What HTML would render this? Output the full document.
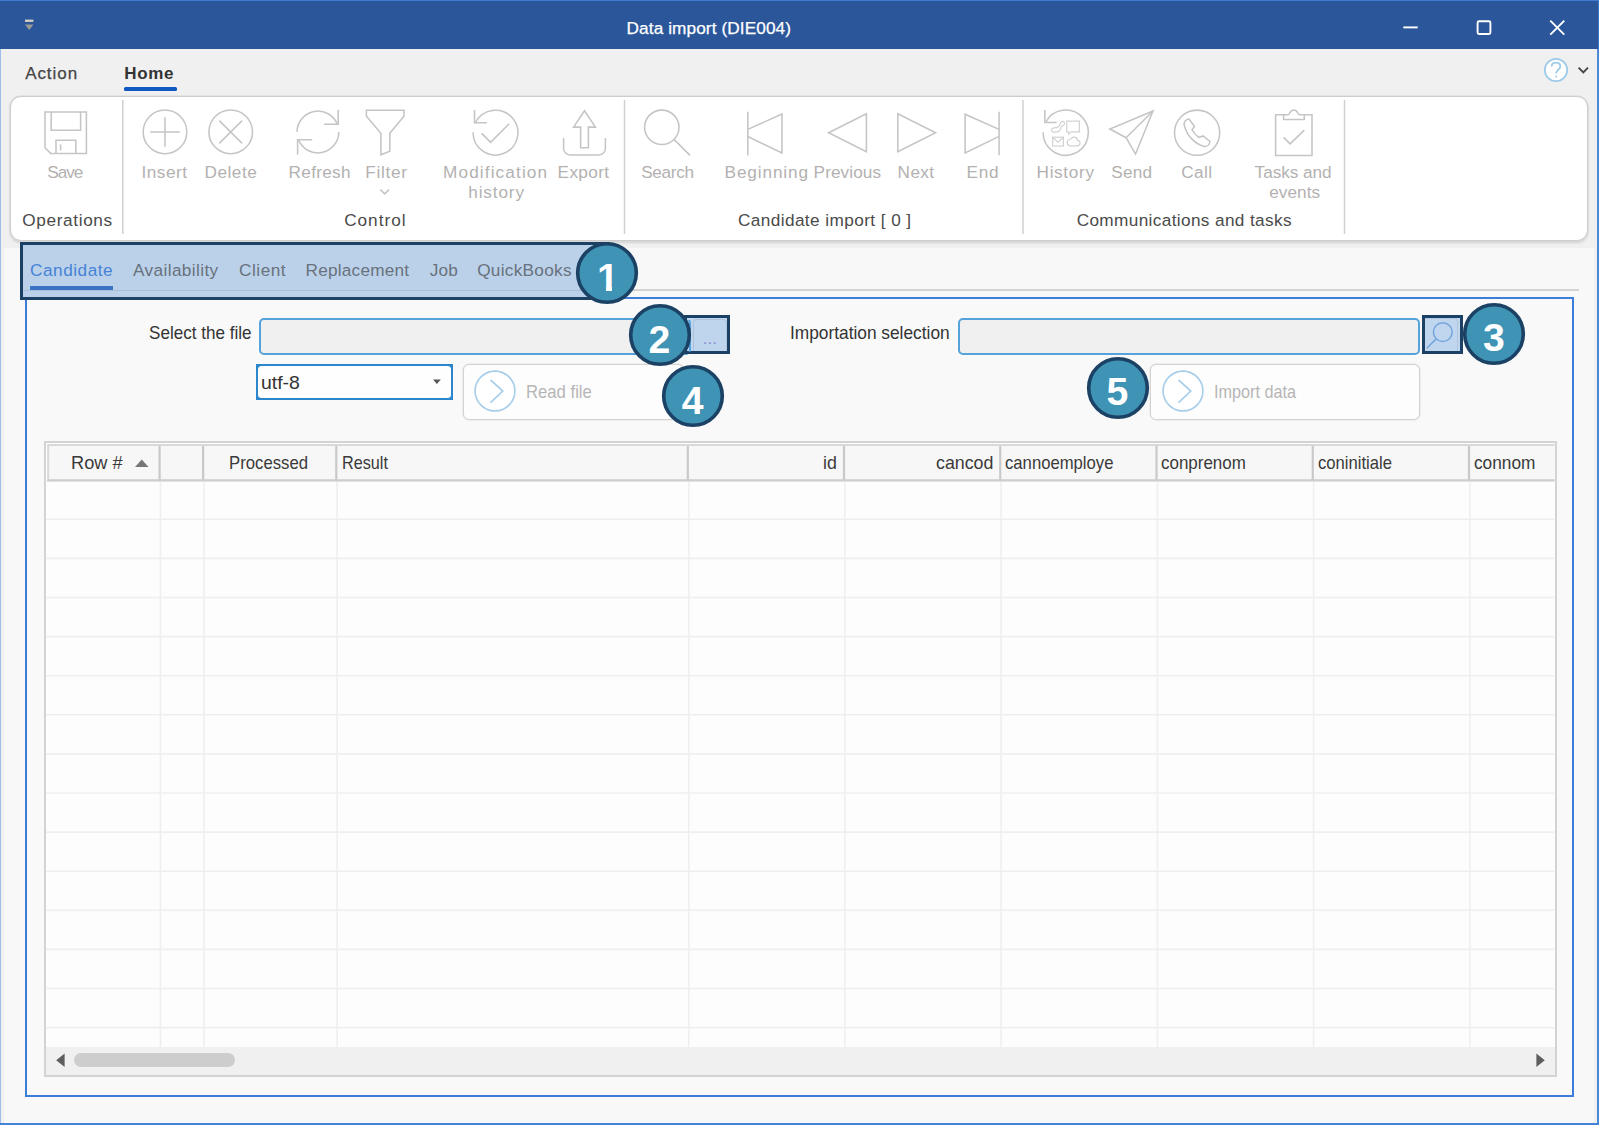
<!DOCTYPE html><html lang="en"><head><meta charset="utf-8"><title>Data import (DIE004)</title><style>
*{box-sizing:border-box}
html,body{margin:0;padding:0}
body{width:1599px;height:1125px;overflow:hidden;background:#f8f8f8;font-family:"Liberation Sans",sans-serif;position:relative}
.t{position:absolute;white-space:pre;line-height:24px;height:24px;transform-origin:0 50%}
.abs{position:absolute}
.tk{-webkit-text-stroke:.25px currentColor}
svg{position:absolute;overflow:visible}
.ic{fill:none;stroke:#c5c5c5;stroke-width:1.55;stroke-linecap:butt;stroke-linejoin:miter}
</style></head><body>
<div id="window">
<div class="abs" id="titlebar" style="left:0;top:0;width:1599px;height:49px;background:#2b579a"></div>
<div class="abs" style="left:0;top:0;width:1599px;height:1px;background:#3f7bd3"></div>
<div class="abs" id="menubar" style="left:0;top:49px;width:1599px;height:1076px;background:#f0f0f0"></div>
<div class="abs" id="content" style="left:3.6px;top:247.8px;width:1590.4px;height:875.5px;background:#f8f8f8"></div>
<div class="abs" style="left:0;top:49px;width:1.1px;height:1076px;background:#9cc0ee"></div>
<div class="abs" style="left:1596.9px;top:49px;width:2.1px;height:1076px;background:#4a8ad8"></div><div class="abs" style="left:1597.5px;top:0;width:1.5px;height:49px;background:#3c78d0"></div>
<div class="abs" style="left:0;top:1123.300px;width:1599px;height:1.700px;background:#4384d6"></div>
<header id="titlebar-content">
<span class="t tk" style="left:626.59px;top:16.30px;font-size:17.2px;color:#ffffff;letter-spacing:0.104px;">Data import (DIE004)</span>
<svg style="left:20px;top:14px" width="20" height="20" viewBox="20 14 20 20"><rect x="25" y="19.6" width="8.4" height="2.3" fill="#d6d0c4"/><path d="M25 24.5h8.4l-4.2 5.400z" fill="#9c9a96"/></svg>
<svg style="left:1400px;top:16px" width="170" height="24" viewBox="1400 16 170 24"><g stroke="#fff" stroke-width="1.9" fill="none"><path d="M1403.3 27.4h14.4"/><rect x="1477.6" y="21.2" width="12.8" height="12.8" rx="1.5"/><path d="M1550.3 20.6l14 14M1564.3 20.6l-14 14"/></g></svg>
</header>
<nav id="menu">
<span class="t tk" style="left:25.17px;top:61.90px;font-size:17px;color:#444444;letter-spacing:0.938px;">Action</span>
<span class="t " style="left:124.16px;top:61.90px;font-size:17px;color:#333333;letter-spacing:0.729px;font-weight:700;">Home</span>
<div class="abs" style="left:123.600px;top:87.200px;width:53.300px;height:3.500px;background:#0f58c2;border-radius:1.500px"></div>
<svg style="left:1540px;top:56px" width="52" height="28" viewBox="1540 56 52 28"><circle cx="1556" cy="70" r="11.2" fill="#fff" stroke="#9ccbea" stroke-width="1.7"/><path d="M1551.6 66.6c0-2.4 1.9-4 4.4-4s4.3 1.6 4.3 3.8c0 3.2-4.2 3.4-4.2 7.2" fill="none" stroke="#9ccbea" stroke-width="1.800"/><circle cx="1556.1" cy="76.6" r="1" fill="#9ccbea"/><path d="M1578.6 67.6l4.7 4.7l4.7-4.7" fill="none" stroke="#444" stroke-width="1.9"/></svg>
</nav>
<section id="ribbon-section">
<div class="abs" id="ribbon" style="left:10px;top:95.600px;width:1577.800px;height:145.300px;background:#fff;border:1px solid #cdcdcd;border-radius:11px;box-shadow:0 0 0 .6px #dadada,0 1.500px 2.500px rgba(0,0,0,.13)"></div>
<svg style="left:0;top:96px" width="1599" height="144" viewBox="0 96 1599 144"><g stroke="#d0d0d0" stroke-width="1.5" fill="none"><path d="M122.8 100V234"/><path d="M624.5 100V234"/><path d="M1023 100V234"/><path d="M1344.5 100V234"/></g></svg>
<span class="t " style="left:47.22px;top:159.60px;font-size:17.2px;color:#b3b1b1;letter-spacing:-1.053px;">Save</span>
<span class="t " style="left:141.41px;top:159.60px;font-size:17.2px;color:#b3b1b1;letter-spacing:0.539px;">Insert</span>
<span class="t " style="left:204.59px;top:159.60px;font-size:17.2px;color:#b3b1b1;letter-spacing:0.491px;">Delete</span>
<span class="t " style="left:288.59px;top:159.60px;font-size:17.2px;color:#b3b1b1;letter-spacing:0.300px;">Refresh</span>
<span class="t " style="left:365.19px;top:159.60px;font-size:17.2px;color:#b3b1b1;letter-spacing:0.695px;">Filter</span>
<span class="t " style="left:443.09px;top:159.60px;font-size:17.2px;color:#b3b1b1;letter-spacing:1.114px;">Modification</span>
<span class="t " style="left:468.31px;top:179.60px;font-size:17.2px;color:#b3b1b1;letter-spacing:0.844px;">history</span>
<span class="t " style="left:557.59px;top:159.60px;font-size:17.2px;color:#b3b1b1;letter-spacing:0.365px;">Export</span>
<span class="t " style="left:641.22px;top:159.60px;font-size:17.2px;color:#b3b1b1;letter-spacing:-0.320px;">Search</span>
<span class="t " style="left:724.59px;top:159.60px;font-size:17.2px;color:#b3b1b1;letter-spacing:0.876px;">Beginning</span>
<span class="t " style="left:813.59px;top:159.60px;font-size:17.2px;color:#b3b1b1;letter-spacing:0.088px;">Previous</span>
<span class="t " style="left:897.59px;top:159.60px;font-size:17.2px;color:#b3b1b1;letter-spacing:0.390px;">Next</span>
<span class="t " style="left:966.59px;top:159.60px;font-size:17.2px;color:#b3b1b1;letter-spacing:0.708px;">End</span>
<span class="t " style="left:1036.59px;top:159.60px;font-size:17.2px;color:#b3b1b1;letter-spacing:0.655px;">History</span>
<span class="t " style="left:1111.22px;top:159.60px;font-size:17.2px;color:#b3b1b1;letter-spacing:0.240px;">Send</span>
<span class="t " style="left:1181.13px;top:159.60px;font-size:17.2px;color:#b3b1b1;letter-spacing:0.465px;">Call</span>
<span class="t " style="left:1254.61px;top:159.60px;font-size:17.2px;color:#b3b1b1;letter-spacing:-0.044px;">Tasks and</span>
<span class="t " style="left:1269.27px;top:179.60px;font-size:17.2px;color:#b3b1b1;letter-spacing:0.035px;">events</span>
<span class="t " style="left:22.19px;top:208.00px;font-size:17.2px;color:#4a4a4a;letter-spacing:0.656px;">Operations</span>
<span class="t " style="left:344.13px;top:208.00px;font-size:17.2px;color:#4a4a4a;letter-spacing:1.013px;">Control</span>
<span class="t " style="left:737.88px;top:208.00px;font-size:17.2px;color:#4a4a4a;letter-spacing:0.424px;">Candidate import [ 0 ]</span>
<span class="t " style="left:1076.63px;top:208.00px;font-size:17.2px;color:#4a4a4a;letter-spacing:0.370px;">Communications and tasks</span>
<svg style="left:0;top:0" width="1599" height="260" viewBox="0 0 1599 260"><g class="ic"><path d="M45 112h41.4v41.4H50.6L45 147.800z"/><path d="M51.200 112v18.200h29.400V112"/><path d="M56 153.400v-13.200h19.800v13.200"/><path d="M60.600 144.400v6"/><circle cx="165" cy="131.9" r="21.8"/><path d="M150.2 131.9h29.600M165 117.2v29.500"/><circle cx="230.7" cy="131.9" r="21.8"/><path d="M219.3 120.600l22.800 22.800M242.100 120.600l-22.800 22.800"/><path d="M297.00 132.00A20.9 20.9 0 0 1 337.41 124.51"/><path d="M338.200 109.800v14.400h-14.200"/><path d="M338.80 132.00A20.9 20.9 0 0 1 298.39 139.49"/><path d="M297.600 154.500v-14.700h14.600"/><path d="M366.400 110.300h37.600v6l-14.200 17v18l-8.900 3.500v-21.500l-14.500-17z"/><path d="M380.400 189.600l4.300 4.200l4.300-4.200"/><path d="M475.37 122.78A22.4 22.4 0 1 1 473.10 132.21"/><path d="M474.500 110v12.800h12.300"/><path d="M481.600 133.400l9 9l18.600-18.600"/><path d="M563.600 138v10.400a6.600 6.600 0 0 0 6.600 6.600h28.600a6.600 6.600 0 0 0 6.600-6.600v-10.400"/><path d="M580.600 147.700v-20.600h-7l10.900-16.400l10.900 16.400h-7v20.600z"/><circle cx="661.800" cy="127.300" r="17.200"/><path d="M674.200 139.600l15.800 15.800"/><path d="M747.800 111.800v43.700"/><path d="M747.800 129.400l34.200-15.400v39l-34.200-16.500"/><path d="M828.600 132.800l37.800-19v38z"/><path d="M935.600 132.800l-37.800-19v38z"/><path d="M999.100 111.800v43.400"/><path d="M999.100 129.400l-34-15.200v38.800l34-16.600"/><path d="M1045.52 122.52A22.6 22.6 0 1 1 1043.15 132.21"/><path d="M1044.800 110v12.500h12"/><g stroke="#d2d2d2" stroke-width="1.2"><path d="M1066.800 121.200h12.600v10.600h-8l-2.600 2.400v-2.400h-2z"/><rect x="1052.600" y="137.200" width="10.800" height="8.800"/><path d="M1052.600 137.200l5.400 5l5.400-5"/><path d="M1069.600 145.800h7.600a2.700 2.700 0 0 0 .3-5.400a3.500 3.500 0 0 0-6.600-1.400a3.500 3.500 0 0 0-1.300 6.800z"/><path d="M1052.300 131.800c-1.400-1-.9-3.200.9-3.600l3.800-.8c2.600-.6 3-2.600 3.600-4.600c.5-1.700 2.800-2 3.700-.4c.8 1.500-.4 3-1.900 3.500c-1 .4-1.500 1.400-1.700 2.400c-.6 2.600-2.600 3.800-5.400 3.800c-1.200 0-2.200.2-3-.3z"/></g><path d="M1153 111l-43.200 18l16.300 8.700l9.400 16.400z"/><path d="M1153 111l-26.900 26.700"/><circle cx="1197.100" cy="132.700" r="22.600"/><path d="M1184.200 124.800c-.6-3 1.800-5.400 4.800-5.800l5.500 7.500l-2.500 3c1.600 3.300 4 6 7 8l4-1.500l7 5.500c-.4 3-2.800 5.200-5.800 4.900c-9.600-2.600-17.600-11-20-21.600z"/><path d="M1283.600 114.800h-8v40.600h36.400v-40.600h-7.600"/><path d="M1283.600 119.400v-4.600h4.600c1.600 0 1.400-4.800 5.600-4.800s4 4.800 5.600 4.800h4.900v4.600z"/><path d="M1283.600 137.400l6.500 6.500l14.200-13.800"/></g></svg>
</section>
<main id="main">
<nav id="tabs">
<div class="abs" style="left:23px;top:289px;width:1555.500px;height:1.800px;background:#d3d3d3"></div>
<div class="abs" id="panel" style="left:25.100px;top:296.700px;width:1548.800px;height:800.200px;border:2px solid #3b7dd8;background:#f9f9f9"></div>
<div class="abs" style="left:20px;top:242.100px;width:590px;height:57.900px;background:#bbd1e9;border:3px solid #1b4265;border-right:none"></div>
<div class="abs" style="left:23px;top:289.5px;width:580px;height:1.5px;background:#a9bfd6"></div>
<span class="t " style="left:30.03px;top:258.40px;font-size:17.2px;color:#4683d6;letter-spacing:0.528px;">Candidate</span>
<div class="abs" style="left:30px;top:286.3px;width:82.5px;height:4.2px;background:#3a72c4"></div>
<span class="t " style="left:133.07px;top:258.40px;font-size:17.2px;color:#68717d;letter-spacing:0.383px;">Availability</span>
<span class="t " style="left:239.03px;top:258.40px;font-size:17.2px;color:#68717d;letter-spacing:0.525px;">Client</span>
<span class="t " style="left:305.59px;top:258.40px;font-size:17.2px;color:#68717d;letter-spacing:0.219px;">Replacement</span>
<span class="t " style="left:429.73px;top:258.40px;font-size:17.2px;color:#68717d;letter-spacing:0.130px;">Job</span>
<span class="t " style="left:477.19px;top:258.40px;font-size:17.2px;color:#68717d;letter-spacing:0.296px;">QuickBooks</span>
</nav>
<section id="import-form">
<span class="t " style="left:148.72px;top:320.90px;font-size:18.5px;color:#333333;transform:scaleX(0.9232);">Select the file</span>
<div class="abs" style="left:258.9px;top:318.4px;width:432.3px;height:36.6px;background:#f0f0f0;border:2px solid #56a2db;border-radius:5px"></div>
<span class="t " style="left:790.30px;top:320.90px;font-size:18.5px;color:#333333;transform:scaleX(0.9351);">Importation selection</span>
<div class="abs" style="left:957.6px;top:318.4px;width:462.6px;height:36.6px;background:#f0f0f0;border:2px solid #56a2db;border-radius:5px"></div>
<div class="abs" style="left:684px;top:315px;width:45.9px;height:38.8px;background:#c0d6ee;border:3px solid #1b4265"></div>
<div class="abs" style="left:684px;top:318.4px;width:7.2px;height:36.6px;border:2px solid #56a2db;border-left:none;border-radius:0 5px 5px 0;clip-path:inset(1.5px 0 3.3px 0)"></div>
<div class="abs" style="left:693.2px;top:319.2px;width:33.6px;height:32px;background:#bfd5ed;border:1.2px solid #aec4dc;border-bottom:none;border-radius:4px 4px 0 0"></div>
<span class="t " style="left:702.85px;top:326.70px;font-size:17px;color:#8d90d2;">...</span>
<div class="abs" style="left:1421.9px;top:315px;width:41px;height:38.7px;background:#c0d6ee;border:3px solid #1b4265"></div>
<div class="abs" style="left:1424.6px;top:318px;width:33.4px;height:33px;border:1.2px solid #adc3db;border-left:none;border-bottom:none;border-radius:0 4px 0 0;opacity:.8"></div>
<svg style="left:1422px;top:315px" width="41" height="39" viewBox="1422 315 41 39"><circle cx="1442.8" cy="332.1" r="9.4" fill="none" stroke="#74a6de" stroke-width="1.5"/><path d="M1436.100 338.900l-9.300 9.300" stroke="#74a6de" stroke-width="1.5" fill="none"/></svg>
<div class="abs" style="left:256.2px;top:364px;width:196.6px;height:36.2px;background:#2b86cb"><div class="abs" style="left:2px;top:2px;right:2px;bottom:2px;background:#fefefe;border-radius:3.5px"></div></div>
<span class="t " style="left:260.94px;top:371.00px;font-size:18.5px;color:#333;transform:scaleX(1.0510);">utf-8</span>
<svg style="left:432px;top:379px" width="10" height="6" viewBox="0 0 10 6"><path d="M1 .6h7.800l-3.900 4.400z" fill="#555"/></svg>
<div class="abs" style="left:462.8px;top:364.1px;width:221px;height:55.6px;background:#fdfdfd;border:1px solid #d3d3d3;border-radius:6px;box-shadow:0 0 0 .5px #e3e3e3"></div>
<svg style="left:473.4px;top:368.6px" width="44" height="44" viewBox="-22 -22 44 44"><circle r="19.9" fill="#fff" stroke="#a5cdea" stroke-width="1.6"/><path d="M-4.5 -11.2L7.8 .1L-4.5 11.6" fill="none" stroke="#a5cdea" stroke-width="1.6"/></svg>
<span class="t " style="left:526.13px;top:380.10px;font-size:18.5px;color:#b6b6b6;transform:scaleX(0.9013);">Read file</span>
<div class="abs" style="left:1150.2px;top:364.2px;width:270.3px;height:55.6px;background:#fdfdfd;border:1px solid #d3d3d3;border-radius:6px;box-shadow:0 0 0 .5px #e3e3e3"></div>
<svg style="left:1161px;top:368.6px" width="44" height="44" viewBox="-22 -22 44 44"><circle r="19.9" fill="#fff" stroke="#a5cdea" stroke-width="1.6"/><path d="M-4.5 -11.2L7.8 .1L-4.5 11.6" fill="none" stroke="#a5cdea" stroke-width="1.6"/></svg>
<span class="t " style="left:1213.70px;top:380.10px;font-size:18.5px;color:#b6b6b6;transform:scaleX(0.8773);">Import data</span>
</section>
<section id="grid-section">
<div class="abs" id="grid" style="left:44px;top:441px;width:1512.5px;height:636px;background:#fdfdfd;border:2px solid #d3d3d3"></div>
<div class="abs" id="gridhead" style="left:47px;top:444px;width:1507.5px;height:37.5px;background:#f7f7f7"></div>
<span class="t " style="left:70.51px;top:450.70px;font-size:18.5px;color:#3a3a3a;transform:scaleX(0.9837);">Row #</span>
<svg style="left:134px;top:459px" width="16" height="9" viewBox="0 0 16 9"><path d="M1 8l6.750-7.500l6.750 7.500z" fill="#767676"/></svg>
<span class="t " style="left:228.73px;top:450.70px;font-size:18.5px;color:#3a3a3a;transform:scaleX(0.9044);">Processed</span>
<span class="t " style="left:341.97px;top:450.70px;font-size:18.5px;color:#3a3a3a;transform:scaleX(0.8762);">Result</span>
<span class="t " style="left:823.31px;top:450.70px;font-size:18.5px;color:#3a3a3a;transform:scaleX(0.9608);">id</span>
<span class="t " style="left:936.24px;top:450.70px;font-size:18.5px;color:#3a3a3a;transform:scaleX(0.9623);">cancod</span>
<span class="t " style="left:1005.29px;top:450.70px;font-size:18.5px;color:#3a3a3a;transform:scaleX(0.9013);">cannoemploye</span>
<span class="t " style="left:1161.28px;top:450.70px;font-size:18.5px;color:#3a3a3a;transform:scaleX(0.9166);">conprenom</span>
<span class="t " style="left:1317.79px;top:450.70px;font-size:18.5px;color:#3a3a3a;transform:scaleX(0.8988);">coninitiale</span>
<span class="t " style="left:1473.77px;top:450.70px;font-size:18.5px;color:#3a3a3a;transform:scaleX(0.9324);">connom</span>
<svg style="left:0;top:0" width="1599" height="1125" viewBox="0 0 1599 1125"><g fill="none" stroke="#efefef" stroke-width="1.600"><path d="M46 519.30H1554.500"/><path d="M46 558.40H1554.500"/><path d="M46 597.50H1554.500"/><path d="M46 636.60H1554.500"/><path d="M46 675.70H1554.500"/><path d="M46 714.80H1554.500"/><path d="M46 753.90H1554.500"/><path d="M46 793.00H1554.500"/><path d="M46 832.10H1554.500"/><path d="M46 871.20H1554.500"/><path d="M46 910.30H1554.500"/><path d="M46 949.40H1554.500"/><path d="M46 988.50H1554.500"/><path d="M46 1027.60H1554.500"/><path d="M160.5 481.500V1047"/><path d="M204 481.500V1047"/><path d="M337.2 481.500V1047"/><path d="M688.7 481.500V1047"/><path d="M844.9 481.500V1047"/><path d="M1001.1 481.500V1047"/><path d="M1157.4 481.500V1047"/><path d="M1313.6 481.500V1047"/><path d="M1469.9 481.500V1047"/></g><g fill="none" stroke="#c9c9c9" stroke-width="2.200"><path d="M159.6 445V481"/><path d="M203.1 445V481"/><path d="M336.3 445V481"/><path d="M687.8 445V481"/><path d="M844 445V481"/><path d="M1000.25 445V481"/><path d="M1156.5 445V481"/><path d="M1312.75 445V481"/><path d="M1469 445V481"/></g><path d="M48.200 481.500V445H1554.500" fill="none" stroke="#d9d9d9" stroke-width="2"/><path d="M47.200 480.300H1554.500" fill="none" stroke="#cdcdcd" stroke-width="2.200"/></svg>
<div class="abs" style="left:46px;top:1047px;width:1509px;height:27.5px;background:#f0f0f0"></div>
<div class="abs" style="left:73.7px;top:1053.4px;width:161px;height:13.6px;background:#cdcdcd;border-radius:7px"></div>
<svg style="left:0;top:1050px" width="1599" height="22" viewBox="0 1050 1599 22"><path d="M64.600 1053.600v13.400l-8.400-6.700z" fill="#5e5e5e"/><path d="M1536.400 1053.600v13.400l8.400-6.700z" fill="#5e5e5e"/></svg>
</section>
</main>
<aside id="callouts">
<svg class="co" style="left:573.8px;top:239.9px" width="66" height="66" viewBox="-33 -33 66 66"><circle r="29.3" fill="#3f93b5" stroke="#1b4265" stroke-width="3.6"/></svg>
<span class="t" style="font-weight:700;font-size:39.2px;color:#fff;left:597.10px;top:255.60px;line-height:44px;height:44px">1</span>
<div class="abs" style="left:597.86px;top:286.70px;width:8.38px;height:4.98px;background:#3f93b5"></div>
<div class="abs" style="left:611.63px;top:286.70px;width:9.02px;height:4.98px;background:#3f93b5"></div>
<svg class="co" style="left:626.5px;top:302.3px" width="66" height="66" viewBox="-33 -33 66 66"><circle r="29.3" fill="#3f93b5" stroke="#1b4265" stroke-width="3.6"/></svg>
<span class="t" style="font-weight:700;font-size:39.2px;color:#fff;left:648.60px;top:318.00px;line-height:44px;height:44px">2</span>
<svg class="co" style="left:1460.9px;top:300.5px" width="66" height="66" viewBox="-33 -33 66 66"><circle r="29.3" fill="#3f93b5" stroke="#1b4265" stroke-width="3.6"/></svg>
<span class="t" style="font-weight:700;font-size:39.2px;color:#fff;left:1483.00px;top:316.20px;line-height:44px;height:44px">3</span>
<svg class="co" style="left:659.7px;top:362.8px" width="66" height="66" viewBox="-33 -33 66 66"><circle r="29.3" fill="#3f93b5" stroke="#1b4265" stroke-width="3.6"/></svg>
<span class="t" style="font-weight:700;font-size:39.2px;color:#fff;left:681.80px;top:378.50px;line-height:44px;height:44px">4</span>
<svg class="co" style="left:1084.5px;top:354.7px" width="66" height="66" viewBox="-33 -33 66 66"><circle r="29.3" fill="#3f93b5" stroke="#1b4265" stroke-width="3.6"/></svg>
<span class="t" style="font-weight:700;font-size:39.2px;color:#fff;left:1106.60px;top:370.40px;line-height:44px;height:44px">5</span>
</aside>
</div>
</body></html>
